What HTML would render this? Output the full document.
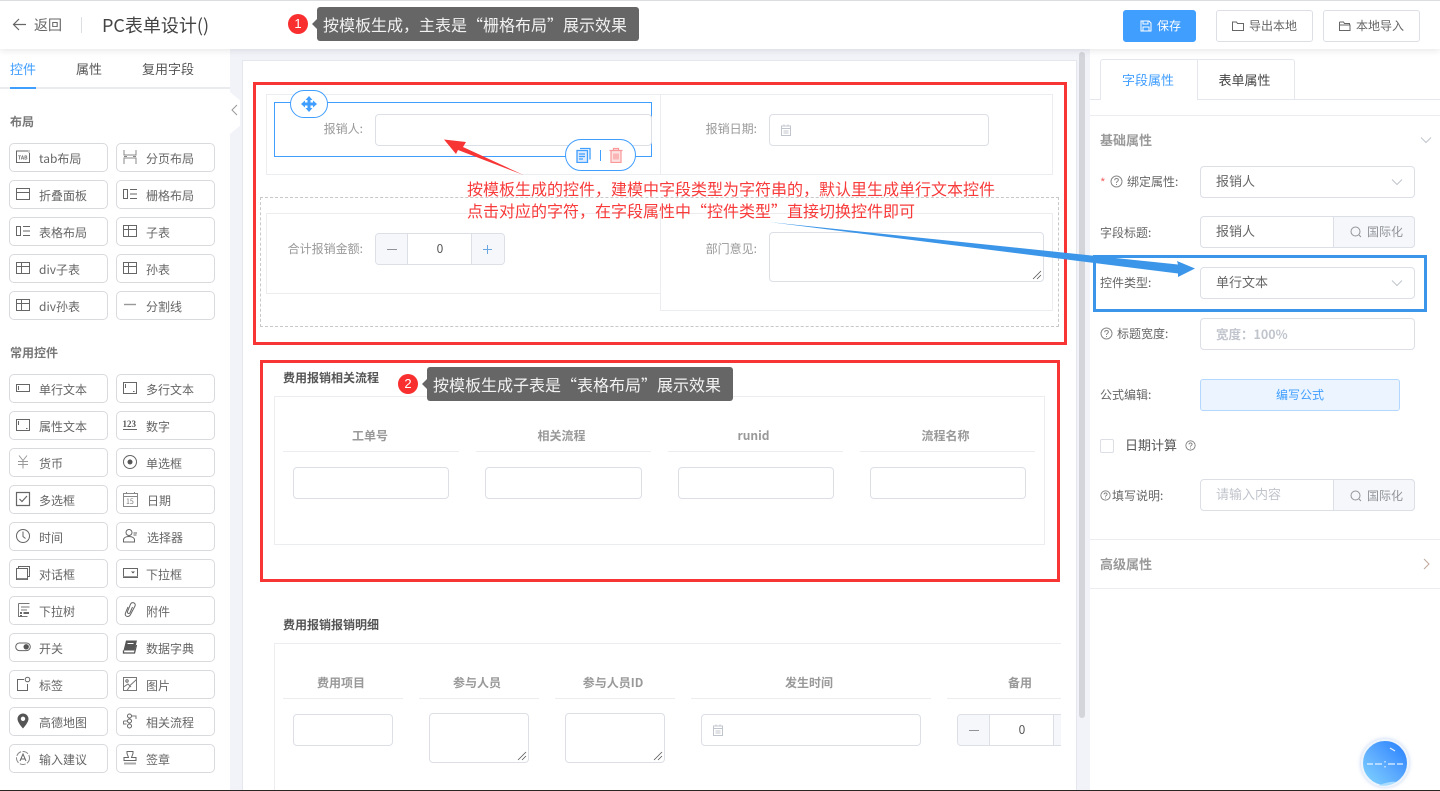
<!DOCTYPE html>
<html lang="zh-CN"><head><meta charset="utf-8"><title>PC表单设计</title>
<style>
*{box-sizing:border-box}
html,body{margin:0;padding:0;width:1440px;height:791px;overflow:hidden;background:#f1f3f9;font-family:"Noto Sans CJK SC","Liberation Sans",sans-serif;color:#666}
.a{position:absolute}
.t{position:absolute;white-space:nowrap;line-height:20px;height:20px;font-size:12px}
.b{position:absolute;width:99px;height:29px;border:1px solid #d9dade;border-radius:5px;background:#fff;font-size:12px;line-height:29px;color:#666;white-space:nowrap;padding-left:29px}
.c2{left:116px}.c1{left:9px}
.b svg{position:absolute;left:5px;top:5px;width:16px;height:16px;fill:none;stroke:#666;stroke-width:1}
.i{position:absolute;background:#fff;border:1px solid #dcdfe6;border-radius:4px}
.l{position:absolute;background:#ebedf0}
.cell{position:absolute;border:1px solid #ebedf0;background:#fff}
.lab{position:absolute;white-space:nowrap;line-height:20px;height:20px;font-size:12px;color:#999;text-align:right}
.h{position:absolute;white-space:nowrap;line-height:20px;height:20px;font-size:12px;color:#999;font-weight:700;text-align:center;margin-left:-2px}
.btn{position:absolute;top:10px;height:32px;background:#fff;border:1px solid #dcdfe6;border-radius:3px;font-size:12px;line-height:30px;white-space:nowrap;color:#666}
.btn svg{position:absolute;top:9px;width:12px;height:12px;fill:none;stroke:#666;stroke-width:1}
.rl{position:absolute;white-space:nowrap;line-height:20px;height:20px;font-size:12px;color:#666}
.sel{font-size:13px;line-height:28px;color:#666;padding-left:15px}
.red{position:absolute;border:3px solid #f73535}
.note{position:absolute;left:467px;white-space:nowrap;font-size:16px;line-height:22px;color:#f73a3a;letter-spacing:0}
.tip{position:absolute;background:#666;border-radius:3px;color:#f2f2f2;font-size:16px;line-height:34px;white-space:nowrap;padding-left:6px;z-index:10}
.tip:before{content:"";position:absolute;left:-5px;top:12px;border-style:solid;border-width:5px 5px 5px 0;border-color:transparent #666 transparent transparent}
.num{position:absolute;width:20px;height:20px;border-radius:50%;background:#f92f2f;color:#fff;text-align:center;font-size:13px;line-height:20px;z-index:10;font-family:"Liberation Sans",sans-serif}
.grip{position:absolute;right:1px;bottom:1px;width:10px;height:10px;fill:none;stroke:#555;stroke-width:.8}
.cal{position:absolute;width:12px;height:12px;fill:none;stroke:#c0c4cc;stroke-width:1}
.chev{position:absolute;width:14px;height:8px;fill:none;stroke:#c0c4cc;stroke-width:1}
</style></head><body>

<!-- top bar -->
<div class="a" style="left:0;top:0;width:1440px;height:49px;background:#fff;border-top:1px solid #dcdde1;box-shadow:0 2px 6px rgba(0,0,0,.09);z-index:5"></div>
<div class="a" style="left:0;top:0;width:1440px;height:49px;z-index:6">
 <svg class="a" style="left:12px;top:17px;width:15px;height:15px;fill:none;stroke:#666;stroke-width:1.2" viewBox="0 0 15 15"><path d="M14 7.500H1.500M7 2L1.500 7.500L7 13"/></svg>
 <div class="t" style="left:34px;top:15px;font-size:14px">返回</div>
 <div class="a" style="left:81px;top:17px;width:1px;height:16px;background:#dcdfe6"></div>
 <div class="t" style="left:102px;top:15px;font-size:18px;color:#444">PC表单设计()</div>
 <div class="btn" style="left:1123px;width:73px;background:#409eff;border-color:#409eff;color:#fff;padding-left:33px;font-weight:400"><svg style="left:16px;stroke:#fff" viewBox="0 0 12 12"><path d="M1 1h8l2 2v8H1zM3 1v3h5V1M3 11V7h6v4"/></svg>保存</div>
 <div class="btn" style="left:1216px;width:97px;padding-left:32px"><svg style="left:15px" viewBox="0 0 12 12"><path d="M.5 2h4l1 1.500h6v7H.5z"/></svg>导出本地</div>
 <div class="btn" style="left:1323px;width:97px;padding-left:32px"><svg style="left:15px" viewBox="0 0 12 12"><path d="M.5 2h4l1 1.500h5v1.500M.5 2v8.500h10.500V5H.5"/></svg>本地导入</div>
</div>

<!-- left panel -->
<div class="a" style="left:0;top:49px;width:230px;height:741px;background:#fff"></div>
<div class="a" style="left:230px;top:92px;width:10px;height:42px;background:#fff;clip-path:polygon(0 0,100% 20%,100% 80%,0 100%)"></div>
<svg class="a" style="left:231px;top:104px;width:7px;height:12px;fill:none;stroke:#999;stroke-width:1" viewBox="0 0 7 12"><path d="M6 1L1 6l5 5"/></svg>
<div class="t" style="left:10px;top:59px;font-size:13px;color:#409eff">控件</div>
<div class="t" style="left:76px;top:59px;font-size:13px;color:#555">属性</div>
<div class="t" style="left:142px;top:59px;font-size:13px;color:#555">复用字段</div>
<div class="l" style="left:0;top:87px;width:230px;height:2px;background:#e9ebef"></div>
<div class="a" style="left:10px;top:87px;width:26px;height:2px;background:#409eff"></div>
<div class="t" style="left:10px;top:112px;font-weight:700;color:#777;margin-top:0">布局</div>

<div class="b c1" style="top:143px"><svg viewBox="0 0 16 16"><path d="M13 2H1.500v11.500h13V4"/><text x="3" y="10.500" font-size="5" fill="#666" stroke="none" font-weight="700">TAB</text><path d="M14 1v3" stroke="#999"/></svg>tab布局</div>
<div class="b c2" style="top:143px"><svg viewBox="0 0 16 16"><path d="M2 1v5h12V1M2 15V9h12v6M2 7.500h3M11 7.500h3" stroke="#888"/></svg>分页布局</div>
<div class="b c1" style="top:180px"><svg viewBox="0 0 16 16"><path d="M1.500 2.500h13v11h-13zM1.500 6.500h13"/></svg>折叠面板</div>
<div class="b c2" style="top:180px"><svg viewBox="0 0 16 16"><path d="M1.500 3.500h4v9h-4zM8 3.500h7M8 8h7M8 12.500h7"/></svg>栅格布局</div>
<div class="b c1" style="top:217px"><svg viewBox="0 0 16 16"><path d="M1.500 3.500h4v9h-4zM8 3.500h7M8 8h7M8 12.500h7"/></svg>表格布局</div>
<div class="b c2" style="top:217px"><svg viewBox="0 0 16 16"><path d="M1.500 2.500h13v11h-13zM1.500 6.500h13M6.500 2.500v11"/></svg>子表</div>
<div class="b c1" style="top:254px"><svg viewBox="0 0 16 16"><path d="M1.500 2.500h13v11h-13zM1.500 6.500h13M6.500 2.500v11"/></svg>div子表</div>
<div class="b c2" style="top:254px"><svg viewBox="0 0 16 16"><path d="M1.500 2.500h13v11h-13zM1.500 6.500h13M6.500 2.500v11"/></svg>孙表</div>
<div class="b c1" style="top:291px"><svg viewBox="0 0 16 16"><path d="M1.500 2.500h13v11h-13zM1.500 6.500h13M6.500 2.500v11"/></svg>div孙表</div>
<div class="b c2" style="top:291px"><svg viewBox="0 0 16 16"><path d="M2 7.500h12" stroke="#999" stroke-width="1.400"/></svg>分割线</div>

<div class="t" style="left:10px;top:343px;font-weight:700;color:#777">常用控件</div>

<div class="b c1" style="top:374px"><svg viewBox="0 0 16 16"><path d="M1.500 4.500h13v7h-13zM3.500 6v4"/></svg>单行文本</div>
<div class="b c2" style="top:374px"><svg viewBox="0 0 16 16"><path d="M1.500 2.500h13v11h-13zM3.500 4v4M11 11.500h1.500"/></svg>多行文本</div>
<div class="b c1" style="top:411px"><svg viewBox="0 0 16 16"><path d="M1.500 2.500h13v11h-13zM3.500 4v4M11 11.500h1.500"/></svg>属性文本</div>
<div class="b c2" style="top:411px"><svg viewBox="0 0 16 16"><text x=".5" y="10" font-size="9" fill="#555" stroke="none" font-family="Liberation Serif" font-weight="700">123</text><path d="M1 12.500h14"/></svg>数字</div>
<div class="b c1" style="top:448px"><svg viewBox="0 0 16 16"><path d="M4 1.500l4 5 4-5M3 7.500h10M3 10.500h10M8 6.500v8" stroke="#999"/></svg>货币</div>
<div class="b c2" style="top:448px"><svg viewBox="0 0 16 16"><circle cx="8" cy="8" r="6.500"/><circle cx="8" cy="8" r="2.500" fill="#555" stroke="none"/></svg>单选框</div>
<div class="b c1" style="top:485px"><svg viewBox="0 0 16 16"><path d="M1.500 1.500h13v13h-13zM4.500 8l2.500 2.500L12 5" stroke-width="1.200"/></svg>多选框</div>
<div class="b c2" style="top:485px"><svg viewBox="0 0 16 16"><path d="M1.500 2.500h14v13h-14zM1.500 5.500h14M4.500 1v2M12.500 1v2" stroke="#888"/><text x="4" y="13" font-size="7" fill="#777" stroke="none">15</text></svg><span style="margin-left:1px">日期</span></div>
<div class="b c1" style="top:522px"><svg viewBox="0 0 16 16"><circle cx="8" cy="8" r="6.500"/><path d="M8 3.500V8.500l2.500 2"/></svg>时间</div>
<div class="b c2" style="top:522px"><svg viewBox="0 0 16 16"><circle cx="7" cy="4.500" r="3"/><path d="M1.500 14v-2c0-2 2-3.500 5.500-3.500s5.500 1.500 5.500 3.500v2zM11.500 5h3.500M11.500 7h3" /></svg><span style="margin-left:1px">选择器</span></div>
<div class="b c1" style="top:559px"><svg viewBox="0 0 16 16"><path d="M3.500 3.500V1.500h11v10h-2M1.500 3.500h11v11h-11z"/><path d="M2 13h10v1.500H2z" fill="#888" stroke="none"/></svg>对话框</div>
<div class="b c2" style="top:559px"><svg viewBox="0 0 16 16"><path d="M1.500 3.500h14v9h-14z"/><path d="M9 6.500h4l-2 2z" fill="#555" stroke="none"/><path d="M1.500 11.500h14" stroke="#999"/></svg>下拉框</div>
<div class="b c1" style="top:596px"><svg viewBox="0 0 16 16"><path d="M3.500 1.500h11M3.500 1.500v13h9M6 5h8.500M6 8h6" stroke="#777"/><path d="M5 10h2v2H5zM8.500 10H14v2H8.500zM5 13h2v1.500H5z" fill="#666" stroke="none"/></svg>下拉树</div>
<div class="b c2" style="top:596px"><svg viewBox="0 0 16 16"><path d="M6 5L3.500 11c-.8 2 .5 3.500 2 3.500s2.500-1 3-2L13 4c.6-1.500 0-3-1.500-3.300S9 1 8.500 2.200L5.500 9.500c-.3 1 .2 1.800 1 2s1.300-.4 1.600-1L10.500 5"/></svg>附件</div>
<div class="b c1" style="top:633px"><svg viewBox="0 0 16 16" style="left:5px"><path d="M4.500 4h7a3.800 3.800 0 0 1 0 7.600h-7a3.800 3.800 0 0 1 0-7.600z" /><circle cx="11.200" cy="7.800" r="2.700" fill="#555" stroke="none"/></svg>开关</div>
<div class="b c2" style="top:633px"><svg viewBox="0 0 16 16"><path d="M4 1.500h11l-2.500 10H1.500z" fill="#555" stroke="none"/><path d="M1.500 11.500v2.500H12.500l2-8" stroke="#555" stroke-width="1.300"/><path d="M5.500 4.500h6" stroke="#fff"/></svg>数据字典</div>
<div class="b c1" style="top:670px"><svg viewBox="0 0 16 16"><path d="M9 3.500H2.500v11h10V8"/><circle cx="12.500" cy="3.500" r="2.300"/></svg>标签</div>
<div class="b c2" style="top:670px"><svg viewBox="0 0 16 16"><path d="M1.500 1.500h13v13h-13zM1.500 11L6 8l3 3M8 9.500l6.500-6M5 14.500L8 10" stroke="#777"/><circle cx="5" cy="5" r="1.200"/></svg>图片</div>
<div class="b c1" style="top:707px"><svg viewBox="0 0 16 16"><path d="M8 .500C4.800.500 2.500 3 2.500 6c0 3.500 5.500 9.500 5.500 9.500S13.500 9.500 13.500 6C13.500 3 11.200.500 8 .500zM8 8a2.200 2.200 0 1 1 0-4.400A2.200 2.200 0 0 1 8 8z" fill="#555" stroke="none"/></svg>高德地图</div>
<div class="b c2" style="top:707px"><svg viewBox="0 0 16 16"><circle cx="7.500" cy="3" r="2"/><circle cx="7.500" cy="8" r="2"/><circle cx="7.500" cy="13" r="2"/><path d="M5 8H1.500M1.500 8v3h3M10 3h4v3" stroke="#777"/></svg>相关流程</div>
<div class="b c1" style="top:744px"><svg viewBox="0 0 16 16"><circle cx="8" cy="8" r="6.500" stroke-dasharray="6 1.500" stroke="#888"/><path d="M5 11l3-7 3 7M6 9h4"/></svg>输入建议</div>
<div class="b c2" style="top:744px"><svg viewBox="0 0 16 16"><path d="M5 1.500h6v2L9.500 7.500H14v3H2v-3h4.500L5 3.500z"/><path d="M2 12.500h12v2H2z" fill="#aaa" stroke="none"/></svg>签章</div>

<!-- canvas -->
<div class="a" style="left:242px;top:60px;width:835px;height:730px;background:#fff;border:1px solid #e4e7ed;border-bottom:0"></div>
<div class="a" style="left:1079px;top:52px;width:6px;height:666px;background:#d3d5db;border-radius:3px"></div>

<!-- grid cells -->
<div class="cell" style="left:266px;top:94px;width:395px;height:81px"></div>
<div class="cell" style="left:660px;top:94px;width:393px;height:81px"></div>
<div class="a" style="left:260px;top:197px;width:799px;height:130px;border:1px dashed #c8c8c8"></div>
<div class="cell" style="left:266px;top:213px;width:395px;height:81px"></div>
<div class="cell" style="left:660px;top:213px;width:393px;height:98px"></div>

<div class="a" style="left:274px;top:102px;width:378px;height:55px;border:1px solid #409eff"></div>
<div class="a" style="left:290px;top:90px;width:38px;height:28px;border:1px solid #409eff;border-radius:14px;background:#fff"></div>
<svg class="a" style="left:301px;top:96px;width:16px;height:16px" viewBox="0 0 16 16" fill="#409eff"><path d="M8 0l3.500 4H9.500v2.500H12V4.500L16 8l-4 3.500V9.500H9.500V12h2L8 16l-3.500-4h2V9.500H4v2L0 8l4-3.500V6.500h2.500V4h-2z"/></svg>
<div class="lab" style="left:300px;width:63px;top:119px">报销人:</div>
<div class="i" style="left:375px;top:114px;width:277px;height:32px"></div>
<div class="a" style="left:565px;top:139px;width:71px;height:32px;border:1px solid #409eff;border-radius:16px;background:#fff"></div>
<svg class="a" style="left:576px;top:147px;width:15px;height:16px;fill:none;stroke:#409eff;stroke-width:1.300" viewBox="0 0 15 16"><path d="M4 1.500h10v11" /><path d="M1 3.500h10.500v12H1z" fill="#dbeafe"/><path d="M3 7h6M3 9.500h6M3 12h4"/></svg>
<div class="a" style="left:600px;top:150px;width:1px;height:11px;background:#409eff"></div>
<svg class="a" style="left:609px;top:147px;width:14px;height:16px;fill:#fde2e2;stroke:#f89898;stroke-width:1.200" viewBox="0 0 14 16"><path d="M.5 3.500h13M4.500 3.500v-2h5v2M2 3.500h10v12H2zM5 6.500v6M7 6.500v6M9 6.500v6"/></svg>

<div class="lab" style="left:690px;width:67px;top:119px">报销日期:</div>
<div class="i" style="left:769px;top:114px;width:220px;height:32px"></div>
<svg class="cal" style="left:780px;top:124px" viewBox="0 0 12 12"><path d="M1.500 2h9v9.500h-9zM1.500 4.500h9M4 .5v2M8 .5v2M3.500 7h5M3.500 9h5"/></svg>

<div class="lab" style="left:270px;width:93px;top:239px">合计报销金额:</div>
<div class="i" style="left:375px;top:233px;width:130px;height:32px;overflow:hidden">
 <div class="a" style="left:0;top:0;width:32px;height:30px;background:#f5f7fa;border-right:1px solid #dcdfe6"></div>
 <div class="a" style="right:0;top:0;width:33px;height:30px;background:#f5f7fa;border-left:1px solid #dcdfe6"></div>
 <div class="a" style="left:11px;top:15px;width:10px;height:1px;background:#909399"></div>
 <div class="a" style="left:107px;top:15px;width:9px;height:1px;background:#6aa6e0"></div>
 <div class="a" style="left:111px;top:11px;width:1px;height:9px;background:#6aa6e0"></div>
 <div class="a" style="left:32px;top:0;width:64px;text-align:center;font-size:12px;line-height:30px;color:#555">0</div>
</div>
<div class="lab" style="left:690px;width:67px;top:239px">部门意见:</div>
<div class="i" style="left:769px;top:232px;width:275px;height:50px"><svg class="grip" viewBox="0 0 10 10"><path d="M1 9l8-8M5 9l4-4"/></svg></div>

<!-- subtable 1 -->
<div class="t" style="left:283px;top:368px;font-weight:700;color:#555">费用报销相关流程</div>
<div class="cell" style="left:274px;top:396px;width:771px;height:149px"></div>
<div class="h" style="left:284px;width:176px;top:426px">工单号</div>
<div class="h" style="left:476px;width:175px;top:426px">相关流程</div>
<div class="h" style="left:668px;width:175px;top:426px">runid</div>
<div class="h" style="left:860px;width:175px;top:426px">流程名称</div>
<div class="l" style="left:283px;width:176px;top:451px;height:1px"></div>
<div class="l" style="left:476px;width:175px;top:451px;height:1px"></div>
<div class="l" style="left:668px;width:175px;top:451px;height:1px"></div>
<div class="l" style="left:860px;width:175px;top:451px;height:1px"></div>
<div class="i" style="left:293px;top:467px;width:156px;height:32px"></div>
<div class="i" style="left:485px;top:467px;width:157px;height:32px"></div>
<div class="i" style="left:678px;top:467px;width:156px;height:32px"></div>
<div class="i" style="left:870px;top:467px;width:156px;height:32px"></div>

<!-- subtable 2 -->
<div class="t" style="left:283px;top:615px;font-weight:700;color:#555">费用报销报销明细</div>
<div class="a" style="left:274px;top:643px;width:787px;height:147px;border-left:1px solid #ebedf0;border-top:1px solid #ebedf0"></div>
<div class="h" style="left:283px;width:120px;top:673px">费用项目</div>
<div class="h" style="left:419px;width:120px;top:673px">参与人员</div>
<div class="h" style="left:555px;width:120px;top:673px">参与人员ID</div>
<div class="h" style="left:691px;width:240px;top:673px">发生时间</div>
<div class="h" style="left:949px;width:146px;top:673px">备用</div>
<div class="l" style="left:283px;width:120px;top:698px;height:1px"></div>
<div class="l" style="left:419px;width:120px;top:698px;height:1px"></div>
<div class="l" style="left:555px;width:120px;top:698px;height:1px"></div>
<div class="l" style="left:691px;width:240px;top:698px;height:1px"></div>
<div class="l" style="left:947px;width:114px;top:698px;height:1px"></div>
<div class="i" style="left:293px;top:714px;width:100px;height:32px"></div>
<div class="i" style="left:429px;top:713px;width:100px;height:50px"><svg class="grip" viewBox="0 0 10 10"><path d="M1 9l8-8M5 9l4-4"/></svg></div>
<div class="i" style="left:565px;top:713px;width:100px;height:50px"><svg class="grip" viewBox="0 0 10 10"><path d="M1 9l8-8M5 9l4-4"/></svg></div>
<div class="i" style="left:701px;top:714px;width:220px;height:32px"></div>
<svg class="cal" style="left:712px;top:724px" viewBox="0 0 12 12"><path d="M1.500 2h9v9.500h-9zM1.500 4.500h9M4 .5v2M8 .5v2M3.500 7h5M3.500 9h5"/></svg>
<div class="a" style="left:957px;top:714px;width:104px;height:32px;overflow:hidden">
 <div class="i" style="left:0;top:0;width:130px;height:32px;overflow:hidden">
  <div class="a" style="left:0;top:0;width:32px;height:30px;background:#f5f7fa;border-right:1px solid #dcdfe6"></div>
  <div class="a" style="right:0;top:0;width:33px;height:30px;background:#f5f7fa;border-left:1px solid #dcdfe6"></div>
  <div class="a" style="left:11px;top:15px;width:10px;height:1px;background:#909399"></div>
  <div class="a" style="left:32px;top:0;width:64px;text-align:center;font-size:12px;line-height:30px;color:#555">0</div>
 </div>
</div>

<!-- right panel -->
<div class="a" style="left:1090px;top:49px;width:350px;height:741px;background:#fff"></div>
<div class="l" style="left:1090px;top:99px;width:350px;height:1px;background:#e4e7ed"></div>
<div class="a" style="left:1100px;top:59px;width:98px;height:41px;background:#fff;border:1px solid #e4e7ed;border-bottom:0;border-radius:3px 0 0 0;color:#409eff;font-size:13px;line-height:39px;text-align:center;padding-right:2px">字段属性</div>
<div class="a" style="left:1197px;top:59px;width:98px;height:41px;background:#fff;border:1px solid #e4e7ed;border-bottom:1px solid #e4e7ed;border-radius:0 3px 0 0;color:#444;font-size:13px;line-height:39px;text-align:center;padding-right:3px">表单属性</div>
<div class="l" style="left:1090px;top:115px;width:350px;height:1px"></div>
<div class="t" style="left:1100px;top:130px;font-size:13px;font-weight:700;color:#999">基础属性</div>
<svg class="chev" style="left:1420px;top:136px;width:12px" viewBox="0 0 12 8"><path d="M1 1.500l5 5 5-5"/></svg>

<div class="rl" style="left:1100px;top:173px;color:#f56c6c">*</div>
<svg class="a" style="left:1110px;top:175px;width:13px;height:13px;fill:none;stroke:#888;stroke-width:1" viewBox="0 0 13 13"><circle cx="6.500" cy="6.500" r="5.500"/><path d="M4.700 5.200c0-2.300 3.700-2.300 3.700-.2 0 1.300-1.900 1.300-1.900 3"/><path d="M6.500 9v1"/></svg>
<div class="rl" style="left:1127px;top:172px">绑定属性:</div>
<div class="i sel" style="left:1200px;top:166px;width:215px;height:32px">报销人</div>
<svg class="chev" style="left:1391px;top:178px;width:12px" viewBox="0 0 12 8"><path d="M1 1.500l5 5 5-5"/></svg>

<div class="rl" style="left:1100px;top:223px">字段标题:</div>
<div class="i sel" style="left:1200px;top:216px;width:215px;height:32px">报销人</div>
<div class="a" style="left:1333px;top:216px;width:82px;height:32px;background:#f5f7fa;border:1px solid #dcdfe6;border-radius:0 4px 4px 0;font-size:12px;line-height:30px;padding-left:33px;color:#909399">国际化</div>
<svg class="a" style="left:1350px;top:226px;width:12px;height:12px;fill:none;stroke:#909399;stroke-width:1" viewBox="0 0 12 12"><circle cx="5.500" cy="5.500" r="4.500"/><path d="M9 9l2 2"/></svg>

<div class="rl" style="left:1100px;top:273px">控件类型:</div>
<div class="i sel" style="left:1200px;top:267px;width:215px;height:32px">单行文本</div>
<svg class="chev" style="left:1391px;top:279px;width:12px" viewBox="0 0 12 8"><path d="M1 1.500l5 5 5-5"/></svg>

<svg class="a" style="left:1100px;top:327px;width:13px;height:13px;fill:none;stroke:#888;stroke-width:1" viewBox="0 0 13 13"><circle cx="6.500" cy="6.500" r="5.500"/><path d="M4.700 5.200c0-2.300 3.700-2.300 3.700-.2 0 1.300-1.900 1.300-1.900 3"/><path d="M6.500 9v1"/></svg>
<div class="rl" style="left:1117px;top:324px">标题宽度:</div>
<div class="i sel" style="left:1200px;top:318px;width:215px;height:32px;color:#c0c4cc;font-size:12.500px;font-weight:700;line-height:29px">宽度：100%</div>

<div class="rl" style="left:1100px;top:385px">公式编辑:</div>
<div class="a" style="left:1200px;top:379px;width:200px;height:32px;background:#ecf5ff;border:1px solid #b3d8ff;border-radius:3px;color:#409eff;font-size:12px;line-height:30px;text-align:center">编写公式</div>

<div class="a" style="left:1100px;top:439px;width:14px;height:14px;background:#fff;border:1px solid #dcdfe6;border-radius:2px"></div>
<div class="t" style="left:1125px;top:435px;font-size:13px;color:#555">日期计算</div>
<svg class="a" style="left:1185px;top:440px;width:11px;height:11px;fill:none;stroke:#777;stroke-width:1" viewBox="0 0 13 13"><circle cx="6.500" cy="6.500" r="5.500"/><path d="M4.700 5.200c0-2.300 3.700-2.300 3.700-.2 0 1.300-1.900 1.300-1.900 3"/><path d="M6.500 9v1"/></svg>

<svg class="a" style="left:1100px;top:490px;width:11px;height:11px;fill:none;stroke:#777;stroke-width:1" viewBox="0 0 13 13"><circle cx="6.500" cy="6.500" r="5.500"/><path d="M4.700 5.200c0-2.300 3.700-2.300 3.700-.2 0 1.300-1.900 1.300-1.900 3"/><path d="M6.500 9v1"/></svg>
<div class="rl" style="left:1112px;top:486px">填写说明:</div>
<div class="i sel" style="left:1200px;top:479px;width:215px;height:32px;color:#c0c4cc">请输入内容</div>
<div class="a" style="left:1333px;top:479px;width:82px;height:32px;background:#f5f7fa;border:1px solid #dcdfe6;border-radius:0 4px 4px 0;font-size:12px;line-height:32px;padding-left:33px;color:#909399">国际化</div>
<svg class="a" style="left:1350px;top:490px;width:12px;height:12px;fill:none;stroke:#909399;stroke-width:1" viewBox="0 0 12 12"><circle cx="5.500" cy="5.500" r="4.500"/><path d="M9 9l2 2"/></svg>

<div class="l" style="left:1090px;top:539px;width:350px;height:1px"></div>
<div class="t" style="left:1100px;top:554px;font-size:13px;font-weight:700;color:#999">高级属性</div>
<svg class="a" style="left:1423px;top:558px;width:7px;height:12px;fill:none;stroke:#c0a89a;stroke-width:1" viewBox="0 0 7 12"><path d="M1 1l5 5-5 5"/></svg>
<div class="l" style="left:1090px;top:588px;width:350px;height:1px"></div>

<!-- floating ball -->
<div class="a" style="left:1361px;top:739px;width:48px;height:48px;border-radius:50%;border:2px solid #eef4fb;background:linear-gradient(225deg,#2f86ff 10%,#5aa9ff 50%,#79ccff 90%);box-shadow:0 0 4px rgba(90,140,220,.4)"></div>
<svg class="a" style="left:1361px;top:739px;width:48px;height:48px;fill:none;stroke:#e6f2ff;stroke-width:1.200" viewBox="0 0 48 48"><path d="M6 25h6M14 25h7M27 25h7M36 25h6M24 22v1.500M24 27v1.500"/><path d="M29 9l5 3"/><path d="M17 46c6-1 12-4 18-3-4 3-11 5-18 3z" fill="#a9dcff" stroke="none"/></svg>

<!-- bottom edge -->
<div class="a" style="left:0;top:790px;width:1440px;height:1px;background:#2a2624;z-index:9"></div>

<!-- annotation layer -->
<div class="red" style="left:253px;top:82px;width:814px;height:263px"></div>
<div class="red" style="left:260px;top:360px;width:800px;height:222px"></div>
<div class="a" style="left:1093px;top:255px;width:334px;height:57px;border:3px solid #3b95e8"></div>

<svg class="a" style="left:0;top:0;width:1440px;height:791px;pointer-events:none" viewBox="0 0 1440 791">
 <path d="M444 139.500L466 142L463 147L523.500 175L458 150L456 154z" fill="#f73535"/>
 <path d="M769 222L1178 264.500L1177 261L1195 268.500L1178 277L1178 273.500z" fill="#3b95e8"/>
</svg>

<div class="note" style="top:177px">按模板生成的控件，建模中字段类型为字符串的，默认里生成单行文本控件</div>
<div class="note" style="top:199px">点击对应的字符，在字段属性中“控件类型”直接切换控件即可</div>

<div class="num" style="left:288px;top:14px">1</div>
<div class="tip" style="left:317px;top:7px;width:322px;height:34px">按模板生成，主表是“栅格布局”展示效果</div>
<div class="num" style="left:398px;top:374px">2</div>
<div class="tip" style="left:427px;top:367px;width:306px;height:34px">按模板生成子表是“表格布局”展示效果</div>

</body></html>
